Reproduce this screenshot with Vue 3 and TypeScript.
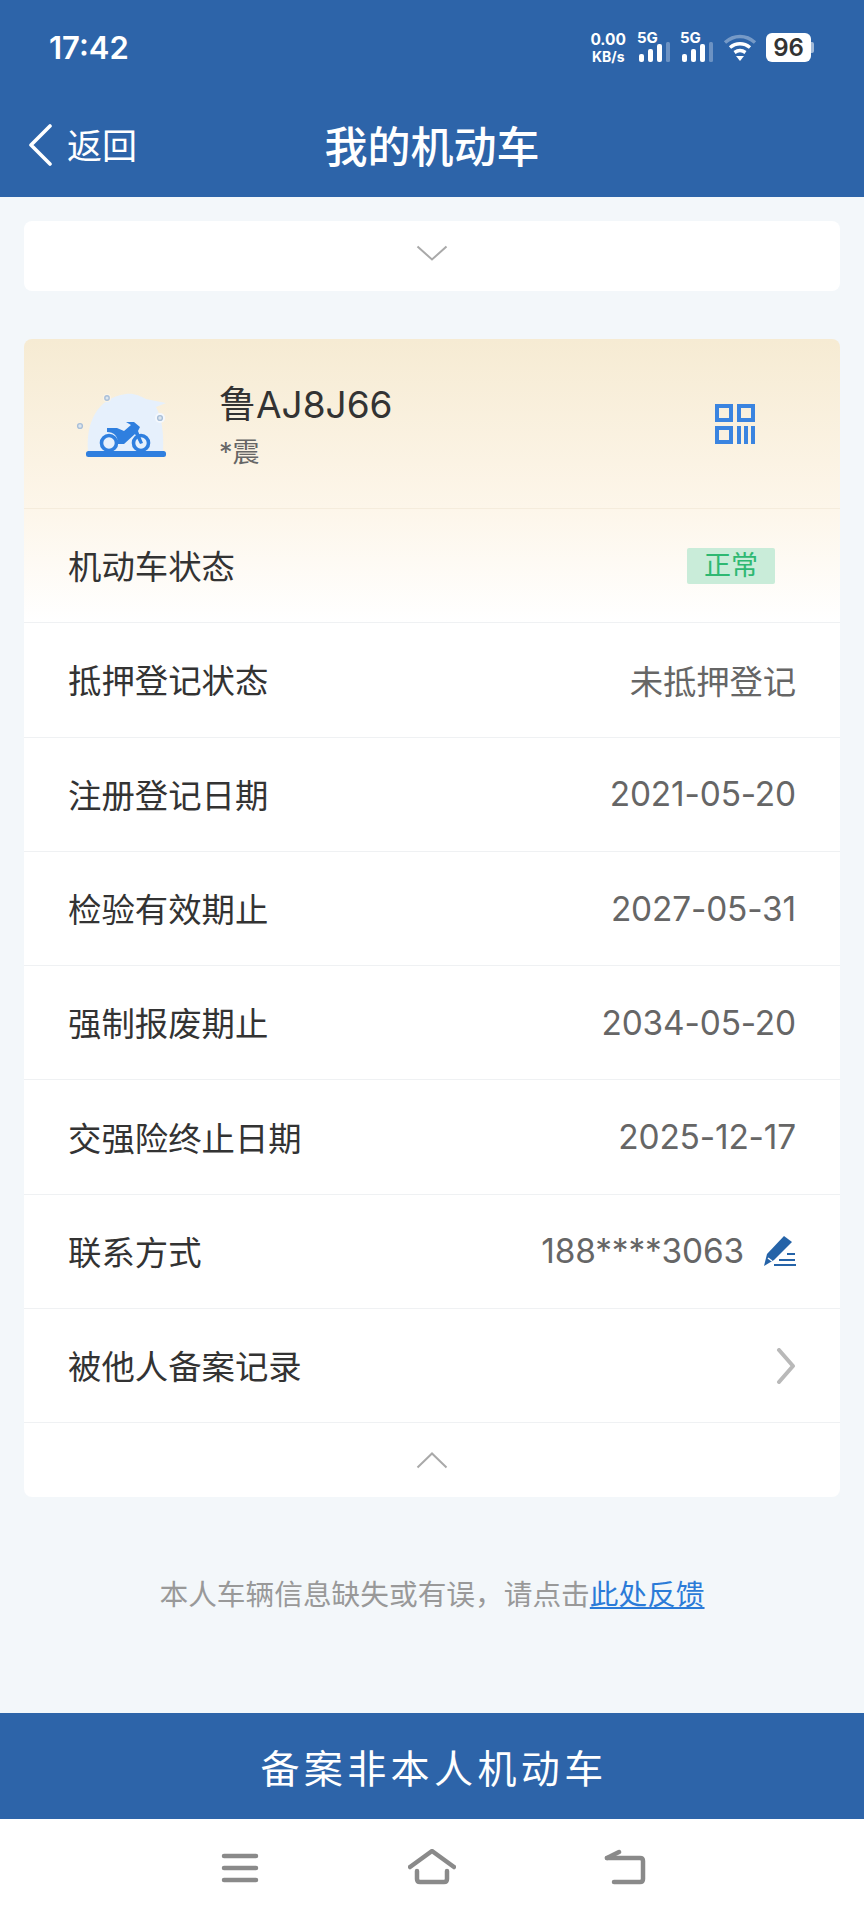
<script setup lang="ts">
interface InfoRow {
  label: string
  value: string
}

const rows: InfoRow[] = [
  { label: '抵押登记状态', value: '未抵押登记' },
  { label: '注册登记日期', value: '2021-05-20' },
  { label: '检验有效期止', value: '2027-05-31' },
  { label: '强制报废期止', value: '2034-05-20' },
  { label: '交强险终止日期', value: '2025-12-17' },
]

const signalBars = [
  { x: 2, h: 8 },
  { x: 11, h: 13 },
  { x: 20, h: 18 },
]
</script>

<template>
  <div class="page">
    <header class="top">
      <div class="status">
        <span class="time">17:42</span>
        <div class="status-icons">
          <div class="speed">
            <span>0.00</span>
            <span class="speed-unit">KB/s</span>
          </div>
          <div v-for="n in 2" :key="n" class="sim">
            <span class="sim-label">5G</span>
            <svg width="34" height="20" viewBox="0 0 34 20">
              <rect
                v-for="b in signalBars"
                :key="b.x"
                :x="b.x"
                :y="20 - b.h"
                width="5"
                :height="b.h"
                rx="2"
                fill="#fff"
              />
              <rect x="29" y="0" width="4" height="20" rx="1.5" fill="#fff" opacity="0.3" />
            </svg>
          </div>
          <svg class="wifi" width="34" height="28" viewBox="0 0 34 28">
            <path d="M2 9.5C11 1.5 23 1.5 32 9.5" fill="none" stroke="#fff" stroke-width="3.4" opacity="0.35" />
            <path d="M7 14.5C13 9.5 21 9.5 27 14.5" fill="none" stroke="#fff" stroke-width="3.4" />
            <path d="M11.5 19.5C15 17 19 17 22.5 19.5" fill="none" stroke="#fff" stroke-width="3.4" />
            <path d="M13 23H21L17 28Z" fill="#fff" />
          </svg>
          <div class="battery">
            <span class="battery-num">96</span>
            <span class="battery-cap" />
          </div>
        </div>
      </div>
      <div class="nav">
        <div class="back">
          <svg width="26" height="42" viewBox="0 0 26 42">
            <path d="M23 2L4 21L23 40" fill="none" stroke="#fff" stroke-width="3.6" stroke-linecap="round" stroke-linejoin="round" />
          </svg>
          <span class="back-text">返回</span>
        </div>
        <h1 class="title">我的机动车</h1>
      </div>
    </header>

    <main class="content">
      <section class="card card-collapsed">
        <svg width="32" height="16" viewBox="0 0 32 16">
          <path d="M1.5 1.5L16 14.5L30.5 1.5" fill="none" stroke="#a9a9a9" stroke-width="2" />
        </svg>
      </section>

      <section class="card card-detail">
        <div class="plate-head">
          <svg class="moto" width="100" height="86" viewBox="0 0 100 86">
            <path d="M14 67C12 40 22 14 52 10C60 9 66 12 72 15L92 19L82 23C88 34 90 50 89 67Z" fill="#e6f0fc" />
            <circle cx="33" cy="14" r="4" fill="#fbf4e6" />
            <circle cx="33" cy="14" r="2.2" fill="#dde6ee" stroke="#a9bfd8" stroke-width="1.4" />
            <circle cx="6" cy="42" r="2.4" fill="#dde6ee" stroke="#a9bfd8" stroke-width="1.4" />
            <circle cx="86" cy="34" r="5" fill="#f4f8fd" />
            <circle cx="86" cy="34" r="2.4" fill="#dde6ee" stroke="#a9bfd8" stroke-width="1.4" />
            <circle cx="35" cy="59" r="7.5" fill="none" stroke="#2f7fdf" stroke-width="3.6" />
            <circle cx="67" cy="59" r="7.5" fill="none" stroke="#2f7fdf" stroke-width="3.6" />
            <path d="M33 44L43 44L50 47L57 41L52 38H60L66 43L64 47L69 59L66 60L61 50L50 60H44C44 52 40 48 33 48Z" fill="#2f7fdf" />
            <rect x="12" y="67" width="80" height="6" rx="2.5" fill="#2f7fdf" />
          </svg>
          <div class="plate-text">
            <div class="plate-no">鲁AJ8J66</div>
            <div class="plate-owner">*震</div>
          </div>
          <svg class="qr" width="40" height="40" viewBox="0 0 40 40">
            <g fill="none" stroke="#3a84e0" stroke-width="4">
              <rect x="2" y="2" width="14" height="14" />
              <rect x="24" y="2" width="14" height="14" />
              <rect x="2" y="24" width="14" height="14" />
            </g>
            <g fill="#3a84e0">
              <rect x="22" y="22" width="4" height="18" />
              <rect x="29" y="22" width="4" height="18" />
              <rect x="36" y="22" width="4" height="18" />
            </g>
          </svg>
        </div>

        <div class="row">
          <span class="label">机动车状态</span>
          <span class="badge">正常</span>
        </div>
        <div v-for="r in rows" :key="r.label" class="row">
          <span class="label">{{ r.label }}</span>
          <span class="value">{{ r.value }}</span>
        </div>
        <div class="row">
          <span class="label">联系方式</span>
          <span class="value value-icon">
            188****3063
            <svg width="33" height="32" viewBox="0 0 33 32">
              <path d="M21 1L29 7L11 25L1 31L4 19Z" fill="#2563a8" />
              <path d="M5 23L9 26" stroke="#fff" stroke-width="1.5" />
              <path d="M24 19H32M16 25H32M11 30H33" stroke="#2563a8" stroke-width="2" fill="none" />
            </svg>
          </span>
        </div>
        <div class="row">
          <span class="label">被他人备案记录</span>
          <svg width="20" height="36" viewBox="0 0 20 36">
            <path d="M3 2L17 18L3 34" fill="none" stroke="#b9b9b9" stroke-width="4" stroke-linecap="round" stroke-linejoin="round" />
          </svg>
        </div>
        <div class="collapse">
          <svg width="32" height="17" viewBox="0 0 32 17">
            <path d="M1.5 15.5L16 1.5L30.5 15.5" fill="none" stroke="#a9a9a9" stroke-width="2" />
          </svg>
        </div>
      </section>

      <p class="feedback">本人车辆信息缺失或有误，请点击<a class="feedback-link">此处反馈</a></p>
    </main>

    <button class="action">备案非本人机动车</button>

    <nav class="sys-nav">
      <svg class="sys-menu" width="40" height="32" viewBox="0 0 40 32">
        <path d="M4 4H36M4 16H36M4 28H36" stroke="#8a8a8a" stroke-width="4.5" stroke-linecap="round" />
      </svg>
      <svg width="48" height="36" viewBox="0 0 48 36">
        <path d="M2 18L24 2L46 18" fill="none" stroke="#8a8a8a" stroke-width="4.5" stroke-linecap="round" stroke-linejoin="round" />
        <path d="M9 22V30Q9 33 12 33H36Q39 33 39 30V22" fill="none" stroke="#8a8a8a" stroke-width="4.5" stroke-linecap="round" />
      </svg>
      <svg width="42" height="36" viewBox="0 0 42 36">
        <path d="M3 9H36Q39 9 39 12V30Q39 33 36 33H10" fill="none" stroke="#8a8a8a" stroke-width="4.5" stroke-linecap="round" />
        <path d="M3 9L15 3" fill="none" stroke="#8a8a8a" stroke-width="4.5" stroke-linecap="round" />
      </svg>
    </nav>
  </div>
</template>

<style scoped>
.page {
  width: 864px;
  height: 1920px;
  display: flex;
  flex-direction: column;
  background: #f3f7fa;
  font-family: Inter, "Noto Sans CJK SC", sans-serif;
  overflow: hidden;
}

.top {
  height: 197px;
  background: #2d64a9;
  color: #fff;
  flex: none;
}
.status {
  height: 94px;
  display: flex;
  align-items: center;
  justify-content: space-between;
  padding: 0 53px 0 49px;
}
.time {
  font-size: 31px;
  font-weight: 600;
}
.status-icons {
  display: flex;
  align-items: center;
  gap: 9px;
}
.speed {
  display: flex;
  flex-direction: column;
  align-items: center;
  font-size: 15.5px;
  font-weight: 700;
  line-height: 18px;
  margin-right: 2px;
}
.speed-unit {
  font-size: 14px;
  line-height: 15px;
}
.sim {
  position: relative;
  width: 34px;
  height: 30px;
  display: flex;
  align-items: flex-end;
}
.sim-label {
  position: absolute;
  left: 0;
  top: -4px;
  font-size: 15px;
  font-weight: 700;
}
.battery {
  position: relative;
  width: 45px;
  height: 29px;
  border-radius: 6px;
  background: #fff;
  display: flex;
  align-items: center;
  justify-content: center;
}
.battery-num {
  color: #333;
  font-size: 24px;
  font-weight: 600;
}
.battery-cap {
  position: absolute;
  right: -3px;
  top: 9px;
  width: 3px;
  height: 11px;
  border-radius: 0 2px 2px 0;
  background: rgba(255, 255, 255, 0.55);
}

.nav {
  position: relative;
  height: 103px;
  display: flex;
  align-items: center;
  justify-content: center;
  padding-bottom: 3px;
  box-sizing: border-box;
}
.back {
  position: absolute;
  left: 27px;
  top: 30px;
  display: flex;
  align-items: center;
  gap: 14px;
  line-height: 42px;
}
.back-text {
  font-size: 35px;
  position: relative;
  top: 1px;
}
.title {
  margin: 0;
  font-size: 43px;
  font-weight: 500;
}

.content {
  flex: 1;
  padding: 24px 24px 0;
}
.card {
  background: #fff;
  border-radius: 8px;
}
.card-collapsed {
  height: 70px;
  display: flex;
  align-items: center;
  justify-content: center;
  padding-bottom: 6px;
  box-sizing: border-box;
}
.card-detail {
  margin-top: 48px;
  background: linear-gradient(180deg, #f6ebd3 0, #fdf6ea 170px, #ffffff 283px);
}

.plate-head {
  position: relative;
  height: 170px;
  display: flex;
  align-items: center;
  padding: 0 0 0 50px;
  box-sizing: border-box;
  border-bottom: 1px solid #f5ecdc;
}
.moto {
  margin-top: 6px;
  flex: none;
}
.plate-text {
  margin-left: 45px;
  margin-top: 4px;
  flex: 1;
}
.plate-no {
  font-size: 37px;
  line-height: 50px;
  color: #333;
}
.plate-owner {
  margin-top: 5px;
  font-size: 27px;
  line-height: 36px;
  color: #666;
}
.qr {
  margin-right: 85px;
  margin-top: 1px;
}

.row {
  height: 114.3px;
  display: flex;
  align-items: center;
  justify-content: space-between;
  padding: 0 44px;
  box-sizing: border-box;
  border-bottom: 1px solid #eff1f3;
}
.label {
  margin-bottom: 2px;
  font-size: 33.4px;
  color: #333;
}
.value {
  font-size: 33.4px;
  letter-spacing: -0.15px;
  color: #666;
}
.value-icon {
  display: flex;
  align-items: center;
  gap: 19px;
}
.badge {
  width: 88px;
  height: 36px;
  margin-right: 21px;
  background: #c9ecd9;
  border-radius: 2px;
  color: #2eb872;
  font-size: 27px;
  line-height: 36px;
  text-align: center;
}
.collapse {
  height: 74px;
  display: flex;
  align-items: center;
  justify-content: center;
  box-sizing: border-box;
}

.feedback {
  margin: 76px 0 0;
  text-align: center;
  font-size: 28.7px;
  line-height: 44px;
  color: #999;
}
.feedback-link {
  color: #2b7bd8;
  text-decoration: underline;
}

.action {
  flex: none;
  height: 106px;
  border: none;
  padding: 0 0 0 4px;
  background: #2d64a9;
  color: #fff;
  font: inherit;
  font-size: 39px;
  letter-spacing: 4.4px;
}

.sys-nav {
  flex: none;
  height: 101px;
  background: #fff;
  display: flex;
  align-items: flex-start;
  justify-content: space-between;
  padding: 30px 218px 0 220px;
  box-sizing: border-box;
}
.sys-menu {
  margin-top: 3px;
}
</style>
